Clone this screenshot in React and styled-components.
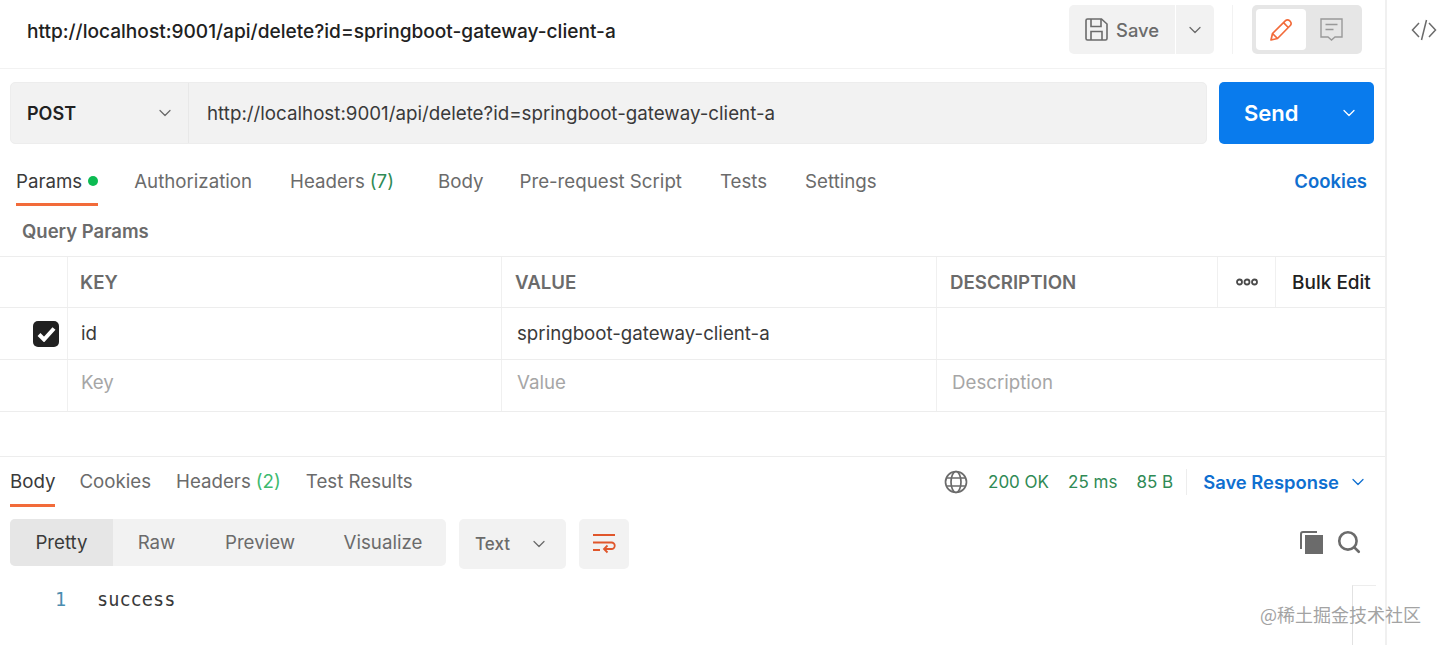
import styled, { createGlobalStyle } from "styled-components";
import { ChevronDown, Search } from "lucide-react";

const GlobalStyle = createGlobalStyle`
  html, body { margin: 0; padding: 0; background: #fff; }
  body { font-family: Inter, "Liberation Sans", sans-serif; color: #212121; overflow: hidden; }
  * { box-sizing: border-box; }
`;

const Page = styled.div`
  position: relative;
  display: flex;
  width: 1440px;
  height: 645px;
  overflow: hidden;
`;

const Main = styled.main`
  width: 1387px;
  height: 645px;
  border-right: 2px solid #f0f0f0;
`;

const SideRail = styled.aside`
  flex: 1;
  display: flex;
  justify-content: center;
  padding: 18px 0 0 21px;
  color: #6b6b6b;
`;

const TitleBar = styled.header`
  display: flex;
  align-items: center;
  height: 69px;
  padding: 0 23px 9px 27px;
  border-bottom: 1px solid #f2f2f2;
`;

const Title = styled.h1`
  flex: 1;
  margin: 0;
  padding-top: 2px;
  font-size: 19.1px;
  font-weight: 500;
  color: #212121;
`;

const SaveGroup = styled.div`
  display: flex;
  gap: 1px;
  height: 49px;
`;

const SaveButton = styled.button`
  display: flex;
  align-items: center;
  gap: 8px;
  width: 106px;
  padding: 0 0 0 16px;
  border: 0;
  border-radius: 5px 0 0 5px;
  background: #f2f2f2;
  color: #6b6b6b;
  font: 500 18.4px Inter, sans-serif;
`;

const SaveCaret = styled.button`
  display: flex;
  align-items: center;
  justify-content: center;
  width: 38px;
  border: 0;
  border-radius: 0 5px 5px 0;
  background: #f2f2f2;
  color: #6b6b6b;
`;

const VDivider = styled.span`
  width: 1px;
  height: 49px;
  margin: 0 19px 0 18px;
  background: #f2f2f2;
`;

const ModeSwitch = styled.div`
  display: flex;
  width: 110px;
  height: 49px;
  padding: 4px;
  border-radius: 5px;
  background: #e6e6e6;
`;

const ModeItem = styled.span`
  display: flex;
  align-items: center;
  justify-content: center;
  width: 50px;
  border-radius: 4px;
  background: ${(p) => (p.$active ? "#fff" : "transparent")};
  color: ${(p) => (p.$active ? "#f26b3a" : "#999")};
`;

const RequestRow = styled.section`
  display: flex;
  gap: 12px;
  padding: 13px 11px 0 10px;
`;

const UrlBar = styled.div`
  flex: 1;
  display: flex;
  height: 62px;
  border: 1px solid #ededed;
  border-radius: 5px;
  background: #f2f2f2;
`;

const MethodSelect = styled.div`
  display: flex;
  align-items: center;
  justify-content: space-between;
  width: 178px;
  padding: 0 13px 0 16px;
  border-right: 1px solid #e8e8e8;
  font-size: 18px;
  font-weight: 600;
  color: #212121;
  svg { color: #6b6b6b; }
`;

const UrlText = styled.div`
  display: flex;
  align-items: center;
  padding-left: 18px;
  font-size: 18.75px;
  color: #3a3a3a;
`;

const SendButton = styled.button`
  display: flex;
  align-items: center;
  justify-content: space-between;
  width: 155px;
  height: 62px;
  padding: 0 15px 0 25px;
  border: 0;
  border-radius: 5px;
  background: #097bed;
  color: #fff;
  font: 600 22px Inter, sans-serif;
`;

const TabRow = styled.nav`
  display: flex;
  align-items: flex-start;
  height: 62px;
  padding: 0 18px 0 16px;
`;

const Tab = styled.div`
  display: flex;
  align-items: center;
  height: 62px;
  padding-top: 15px;
  margin-right: ${(p) => p.$gap}px;
  border-bottom: 3px solid ${(p) => (p.$active ? "#f26b3a" : "transparent")};
  font-size: 18.7px;
  color: ${(p) => (p.$active ? "#3a3a3a" : "#6b6b6b")};
`;

const Dot = styled.span`
  width: 10px;
  height: 10px;
  margin-left: 6px;
  border-radius: 50%;
  background: #0cbb52;
`;

const Count = styled.span`
  margin-left: 5px;
  color: ${(p) => p.$color};
`;

const LinkText = styled.a`
  margin-left: auto;
  padding-top: 26px;
  font-size: 18.5px;
  font-weight: 600;
  color: #0f6fd0;
`;

const SectionLabel = styled.h2`
  display: flex;
  align-items: center;
  height: 50px;
  margin: 0;
  padding: 0 0 0 22px;
  font-size: 18.5px;
  font-weight: 600;
  color: #6b6b6b;
`;

const Table = styled.div`
  border-top: 1px solid #ededed;
`;

const Row = styled.div`
  display: grid;
  grid-template-columns: 68px 434px 435px 281px 58px 1fr;
  height: ${(p) => p.$height}px;
  border-bottom: 1px solid #ededed;
`;

const Cell = styled.div`
  display: flex;
  align-items: center;
  padding-left: ${(p) => p.$pad ?? 13}px;
  padding-bottom: ${(p) => (p.$muted ? 6 : 0)}px;
  border-right: ${(p) => (p.$last ? "0" : "1px solid #f0f0f0")};
  font-size: 18.7px;
  font-weight: ${(p) => (p.$head ? 600 : 400)};
  color: ${(p) => (p.$head ? "#6b6b6b" : p.$muted ? "#a6a6a6" : "#3a3a3a")};
`;

const Check = styled.span`
  display: flex;
  align-items: center;
  justify-content: center;
  width: 26px;
  height: 26px;
  margin-left: 33px;
  border-radius: 5px;
  background: #212121;
`;

const BulkEdit = styled.span`
  font-size: 19px;
  font-weight: 500;
  color: #212121;
`;

const ResponseBar = styled.div`
  display: flex;
  align-items: flex-start;
  height: 63px;
  margin-top: 44px;
  padding: 0 17px 0 10px;
  border-top: 1px solid #ededed;
`;

const ResponseTab = styled(Tab)`
  height: 50px;
  padding-top: 2px;
  font-size: 18.7px;
`;

const StatusGroup = styled.div`
  display: flex;
  align-items: center;
  height: 50px;
  margin-left: auto;
  color: #6b6b6b;
`;

const Stat = styled.span`
  margin-left: ${(p) => p.$gap}px;
  font-size: 17px;
  color: #2f8a55;
`;

const StatDivider = styled.span`
  width: 1px;
  height: 26px;
  margin: 0 16px 0 13px;
  background: #ededed;
`;

const SaveResponse = styled.span`
  display: flex;
  align-items: center;
  gap: 9px;
  font-size: 18.4px;
  font-weight: 600;
  color: #0f6fd0;
`;

const FormatBar = styled.div`
  display: flex;
  align-items: flex-start;
  height: 50px;
  padding: 0 23px 0 10px;
`;

const ViewTabs = styled.div`
  display: flex;
  width: 436px;
  height: 47px;
  border-radius: 5px;
  background: #f2f2f2;
  overflow: hidden;
`;

const ViewTab = styled.span`
  display: flex;
  align-items: center;
  justify-content: center;
  width: ${(p) => p.$width}px;
  background: ${(p) => (p.$active ? "#e6e6e6" : "transparent")};
  font-size: 18.7px;
  color: ${(p) => (p.$active ? "#3a3a3a" : "#6b6b6b")};
`;

const TypeSelect = styled.div`
  display: flex;
  align-items: center;
  justify-content: space-between;
  width: 107px;
  height: 50px;
  margin-left: 13px;
  padding: 0 17px 0 16px;
  border-radius: 5px;
  background: #f2f2f2;
  font-size: 17px;
  font-weight: 500;
  color: #6b6b6b;
`;

const WrapButton = styled.span`
  display: flex;
  align-items: center;
  justify-content: center;
  width: 50px;
  height: 50px;
  margin-left: 13px;
  border-radius: 5px;
  background: #f2f2f2;
`;

const ToolIcons = styled.div`
  display: flex;
  align-items: center;
  gap: 13px;
  height: 46px;
  margin-left: auto;
  color: #6b6b6b;
`;

const Code = styled.div`
  display: flex;
  padding: 19px 0 0 55px;
  font: 18.6px/24px "DejaVu Sans Mono", "Liberation Mono", monospace;
  color: #3a3a3a;
`;

const LineNumber = styled.span`
  width: 42px;
  color: #4b8db0;
`;

const ScrollCorner = styled.span`
  position: absolute;
  left: 1352px;
  top: 585px;
  width: 24px;
  height: 60px;
  border-top: 1px solid #ededed;
  border-left: 1px solid #e2e2e2;
`;

const Watermark = styled.span`
  position: absolute;
  left: 1260px;
  top: 603px;
  font: 18px/22px "Noto Sans CJK SC", sans-serif;
  color: #a3a3a3;
`;

const Chevron = ({ size = 20, color = "currentColor" }) => (
  <ChevronDown size={size} color={color} strokeWidth={1.5} />
);

const SaveIcon = () => (
  <svg width="23" height="23" viewBox="0 0 23 23" fill="none" stroke="currentColor" strokeWidth="1.6">
    <path d="M2.500 1h14l5.500 5v14.500a1.500 1.500 0 0 1-1.500 1.500h-18A1.500 1.500 0 0 1 1 20.500v-18A1.500 1.500 0 0 1 2.500 1z" />
    <path d="M6 1v7.500h10V1M6 22v-8.500h11V22" />
  </svg>
);

const PencilIcon = () => (
  <svg width="24" height="24" viewBox="0 0 24 24" fill="none" stroke="currentColor" strokeWidth="1.700" strokeLinejoin="round">
    <path d="m2 22 1.500-6.500L16.500 2.700a2.800 2.800 0 0 1 4 0l.8.800a2.800 2.800 0 0 1 0 4L8.500 20.500z" />
    <path d="m14.500 4.700 4.800 4.800M3.500 15.500l5 5" />
  </svg>
);

const GlobeIcon = () => (
  <svg width="24" height="24" viewBox="0 0 24 24" fill="none" stroke="currentColor" strokeWidth="1.700">
    <circle cx="12" cy="12" r="10.500" />
    <ellipse cx="12" cy="12" rx="5" ry="10.500" />
    <path d="M2.500 8h19M2.500 16h19" />
  </svg>
);

const CommentIcon = () => (
  <svg width="25" height="25" viewBox="0 0 25 25" fill="none" stroke="currentColor" strokeWidth="1.400">
    <path d="M2 2h21v18h-7l-3.500 3-3.500-3H2z" />
    <path d="M6.500 7.500h12M6.500 12.500h8" />
  </svg>
);

const CodeIcon = () => (
  <svg width="26" height="24" viewBox="0 0 26 24" fill="none" stroke="currentColor" strokeWidth="1.500">
    <path d="M8 5 1.500 12 8 19M18 5l6.500 7-6.500 7M15.500 2l-5 20" />
  </svg>
);

const CheckMark = () => (
  <svg width="19" height="16" viewBox="0 0 19 16" fill="none" stroke="#fff" strokeWidth="4">
    <path d="m2 8.500 5 5L17 2.500" />
  </svg>
);

const DotsIcon = () => (
  <svg width="22" height="8" viewBox="0 0 22 8" fill="none" stroke="#4a4a4a" strokeWidth="1.800">
    <circle cx="3.500" cy="4" r="2.500" />
    <circle cx="11" cy="4" r="2.500" />
    <circle cx="18.500" cy="4" r="2.500" />
  </svg>
);

const CopyIcon = () => (
  <svg width="23" height="23" viewBox="0 0 23 23" fill="#6b6b6b">
    <path d="M5 4h18v19H5z" />
    <path d="M3 0h14v2H3a1 1 0 0 0-1 1v15H0V3a3 3 0 0 1 3-3z" />
  </svg>
);

const WrapIcon = () => (
  <svg width="26" height="24" viewBox="0 0 26 24" fill="none" stroke="#e0562b" strokeWidth="1.800">
    <path d="M2 3h22M2 10.500h18.500a3.200 3.200 0 0 1 0 6.500H13M16.500 13.500 13 17l3.500 3.500M2 18h7" />
  </svg>
);

const requestTabs = [
  { label: "Params", active: true, dot: true, gap: 36 },
  { label: "Authorization", gap: 38 },
  { label: "Headers", count: "(7)", gap: 44 },
  { label: "Body", gap: 36 },
  { label: "Pre-request Script", gap: 38 },
  { label: "Tests", gap: 38 },
  { label: "Settings", gap: 0 },
];

const responseTabs = [
  { label: "Body", active: true, gap: 24 },
  { label: "Cookies", gap: 25 },
  { label: "Headers", count: "(2)", gap: 25 },
  { label: "Test Results", gap: 0 },
];

const URL = "http://localhost:9001/api/delete?id=springboot-gateway-client-a";

export default function App() {
  return (
    <Page>
      <GlobalStyle />
      <Main>
        <TitleBar>
          <Title>{URL}</Title>
          <SaveGroup>
            <SaveButton>
              <SaveIcon />
              Save
            </SaveButton>
            <SaveCaret>
              <Chevron />
            </SaveCaret>
          </SaveGroup>
          <VDivider />
          <ModeSwitch>
            <ModeItem $active>
              <PencilIcon />
            </ModeItem>
            <ModeItem>
              <CommentIcon />
            </ModeItem>
          </ModeSwitch>
        </TitleBar>

        <RequestRow>
          <UrlBar>
            <MethodSelect>
              POST
              <Chevron />
            </MethodSelect>
            <UrlText>{URL}</UrlText>
          </UrlBar>
          <SendButton>
            Send
            <Chevron />
          </SendButton>
        </RequestRow>

        <TabRow>
          {requestTabs.map((t) => (
            <Tab key={t.label} $active={t.active} $gap={t.gap}>
              {t.label}
              {t.dot && <Dot />}
              {t.count && <Count $color="#2f8a55">{t.count}</Count>}
            </Tab>
          ))}
          <LinkText>Cookies</LinkText>
        </TabRow>

        <SectionLabel>Query Params</SectionLabel>

        <Table>
          <Row $height={51}>
            <Cell $pad={0} />
            <Cell $head $pad={12}>KEY</Cell>
            <Cell $head>VALUE</Cell>
            <Cell $head>DESCRIPTION</Cell>
            <Cell $pad={18}>
              <DotsIcon />
            </Cell>
            <Cell $last $pad={16}>
              <BulkEdit>Bulk Edit</BulkEdit>
            </Cell>
          </Row>
          <Row $height={52}>
            <Cell $pad={0}>
              <Check>
                <CheckMark />
              </Check>
            </Cell>
            <Cell>id</Cell>
            <Cell $pad={15}>springboot-gateway-client-a</Cell>
            <Cell $last />
          </Row>
          <Row $height={52}>
            <Cell $pad={0} />
            <Cell $muted>Key</Cell>
            <Cell $muted $pad={15}>Value</Cell>
            <Cell $muted $last $pad={15}>Description</Cell>
          </Row>
        </Table>

        <ResponseBar>
          {responseTabs.map((t) => (
            <ResponseTab key={t.label} $active={t.active} $gap={t.gap}>
              {t.label}
              {t.count && <Count $color="#3dba6f">{t.count}</Count>}
            </ResponseTab>
          ))}
          <StatusGroup>
            <GlobeIcon />
            <Stat $gap={20}>200 OK</Stat>
            <Stat $gap={19}>25 ms</Stat>
            <Stat $gap={19}>85 B</Stat>
            <StatDivider />
            <SaveResponse>
              Save Response
              <Chevron />
            </SaveResponse>
          </StatusGroup>
        </ResponseBar>

        <FormatBar>
          <ViewTabs>
            <ViewTab $active $width={103}>Pretty</ViewTab>
            <ViewTab $width={87}>Raw</ViewTab>
            <ViewTab $width={120}>Preview</ViewTab>
            <ViewTab $width={126}>Visualize</ViewTab>
          </ViewTabs>
          <TypeSelect>
            Text
            <Chevron />
          </TypeSelect>
          <WrapButton>
            <WrapIcon />
          </WrapButton>
          <ToolIcons>
            <CopyIcon />
            <Search size={26} strokeWidth={2.4} />
          </ToolIcons>
        </FormatBar>

        <Code>
          <LineNumber>1</LineNumber>
          <span>success</span>
        </Code>
      </Main>
      <SideRail>
        <CodeIcon />
      </SideRail>
      <ScrollCorner />
      <Watermark>@稀土掘金技术社区</Watermark>
    </Page>
  );
}
